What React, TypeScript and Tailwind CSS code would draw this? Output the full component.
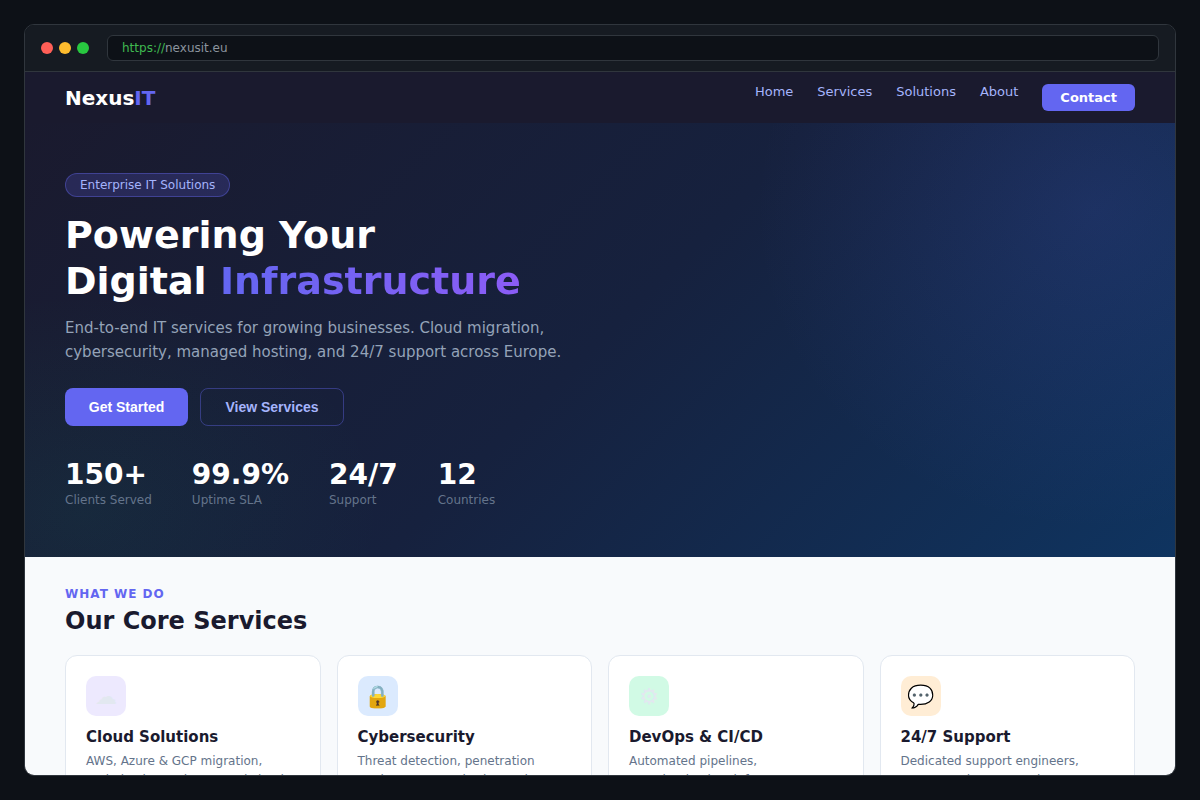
import React from "react";

const sans = "font-['DejaVu_Sans',sans-serif]";

const cards = [
  { t: "Cloud Solutions", i: "☁", bg: "bg-[#ede9fe]", l: ["AWS, Azure & GCP migration,", "optimization and managed cloud"] },
  { t: "Cybersecurity", i: "🔒", bg: "bg-[#dbeafe]", l: ["Threat detection, penetration", "testing, SOC monitoring and"] },
  { t: "DevOps & CI/CD", i: "⚙", bg: "bg-[#d1fae5]", l: ["Automated pipelines,", "containerization, infrastructure"] },
  { t: "24/7 Support", i: "💬", bg: "bg-[#ffedd5]", l: ["Dedicated support engineers,", "guaranteed response times, SLA"] },
];

const stats = [
  ["150+", "Clients Served"],
  ["99.9%", "Uptime SLA"],
  ["24/7", "Support"],
  ["12", "Countries"],
];

export default function App() {
  return (
    <div className={`h-[800px] w-[1200px] overflow-hidden bg-[#0d1117] p-6 ${sans}`}>
      <div className="flex h-[752px] flex-col overflow-hidden rounded-[10px] border border-[#30363d]">
        <div className="flex h-[47px] shrink-0 items-center gap-[6px] border-b border-[#30363d] bg-[#161b22] pl-4 pr-4">
          <span className="h-3 w-3 rounded-full bg-[#ff5f57]" />
          <span className="h-3 w-3 rounded-full bg-[#febc2e]" />
          <span className="h-3 w-3 rounded-full bg-[#28c840]" />
          <div className="ml-[12px] flex h-[26px] flex-1 items-center rounded-md border border-[#30363d] bg-[#0d1117] px-[14px] text-xs text-[#8b949e]">
            <span className="text-[#3fb950]">https://</span>nexusit.eu
          </div>
        </div>
        <div className="flex h-[51px] shrink-0 justify-between bg-[#1a1a2e] px-10 pt-3">
          <div className="text-xl/[28px] font-bold text-white">
            Nexus<span className="text-[#6366f1]">IT</span>
          </div>
          <div className="flex items-start gap-6 text-[13px]/[15px] text-[#a5b4fc]">
            <span>Home</span>
            <span>Services</span>
            <span>Solutions</span>
            <span>About</span>
            <span className="rounded-md bg-[#6366f1] px-[18px] py-[6px] font-bold text-white">Contact</span>
          </div>
        </div>
        <div className="h-[434px] shrink-0 overflow-hidden bg-[radial-gradient(ellipse_340px_320px_at_93%_20%,rgba(99,102,241,0.13)_0%,transparent_100%),radial-gradient(ellipse_300px_220px_at_5%_90%,rgba(16,185,129,0.07)_0%,transparent_100%),linear-gradient(135deg,#1a1a2e_0%,#16213e_50%,#0f3460_100%)] px-10 pt-[49px]">
          <div className="inline-block rounded-full border border-[#6366f1]/40 bg-[#6366f1]/20 px-[14px] py-1 text-xs/[14px] text-[#a5b4fc]">
            Enterprise IT Solutions
          </div>
          <h1 className="mt-[15px] text-[38px]/[46px] font-bold text-white">
            Powering Your
            <br />
            Digital{" "}
            <span className="bg-gradient-to-r from-[#6366f1] to-[#8b5cf6] bg-clip-text text-transparent">Infrastructure</span>
          </h1>
          <p className="mt-[12px] text-[15px]/[24px] text-[#94a3b8]">
            End-to-end IT services for growing businesses. Cloud migration,
            <br />
            cybersecurity, managed hosting, and 24/7 support across Europe.
          </p>
          <div className="mt-6 flex gap-3 font-['Liberation_Sans',sans-serif] text-sm font-bold">
            <button className="h-[38px] w-[123px] rounded-lg bg-[#6366f1] text-white">Get Started</button>
            <button className="h-[38px] w-[144px] rounded-lg border border-[#6366f1]/40 text-[#a5b4fc]">View Services</button>
          </div>
          <div className="mt-[31px] flex gap-10">
            {stats.map(([n, l]) => (
              <div key={l}>
                <div className="text-[28px]/[36px] font-bold text-white">{n}</div>
                <div className="text-xs/[14px] text-[#64748b]">{l}</div>
              </div>
            ))}
          </div>
        </div>
        <div className="flex-1 overflow-hidden bg-[#f8fafc] px-10 pt-7">
          <div className="text-xs/[18px] font-bold uppercase tracking-[1px] text-[#6366f1]">What we do</div>
          <h2 className="mt-[2px] text-2xl/[32px] font-bold text-[#1a1a2e]">Our Core Services</h2>
          <div className="mt-[18px] grid grid-cols-4 gap-4">
            {cards.map((c) => (
              <div key={c.t} className="h-[200px] rounded-xl border border-[#e2e8f0] bg-white p-5">
                <div className={`flex h-10 w-10 items-center justify-center rounded-[10px] text-[22px] ${c.bg} text-[#e2e8f0]`}>{c.i}</div>
                <div className="mt-[10px] text-[15px]/[22px] font-bold text-[#1a1a2e]">{c.t}</div>
                <div className="mt-[4px] text-xs/[19.2px] text-[#64748b]">
                  {c.l.map((x) => (
                    <div key={x}>{x}</div>
                  ))}
                </div>
              </div>
            ))}
          </div>
        </div>
      </div>
    </div>
  );
}
